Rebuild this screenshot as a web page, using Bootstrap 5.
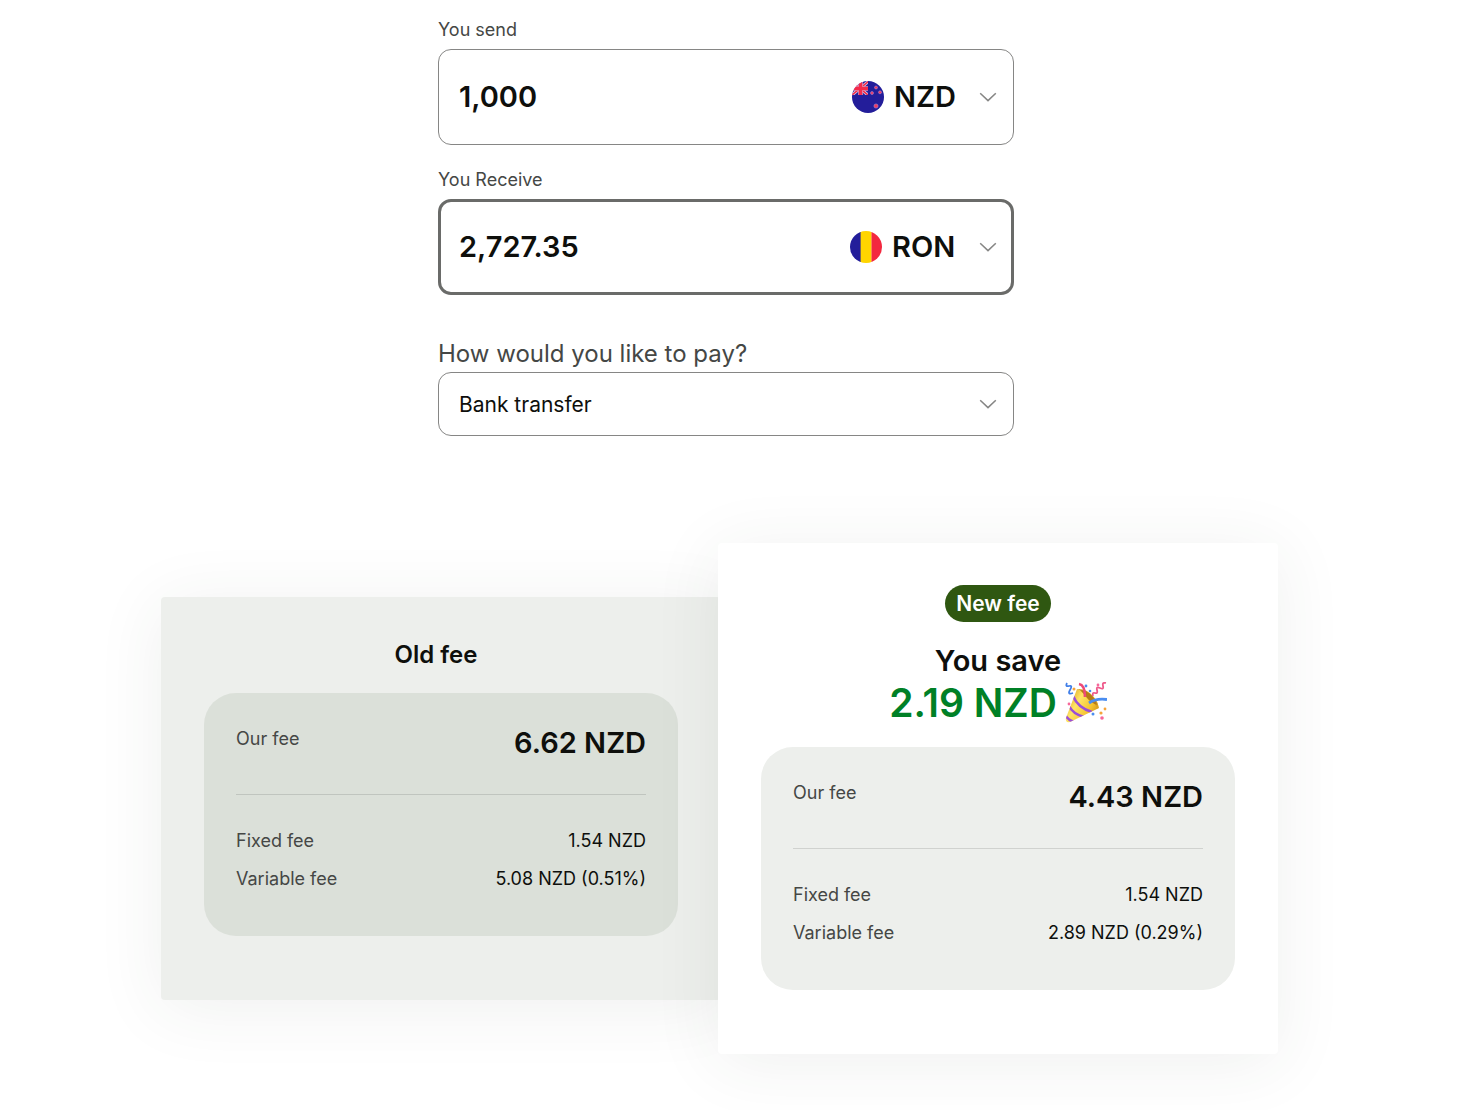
<!DOCTYPE html>
<html lang="en">
<head>
<meta charset="utf-8">
<meta name="viewport" content="width=device-width, initial-scale=1">
<title>Fee comparison</title>
<link rel="stylesheet" href="https://cdn.jsdelivr.net/npm/bootstrap@5.3.0/dist/css/bootstrap.min.css">
<style>
  body { font-family: Inter, "Liberation Sans", sans-serif; color: #0e0f0c; font-size: 18px; line-height: 28px; padding: 16px 6px 56px 0; overflow-x: hidden; }
  .calc { max-width: 576px; }
  .calc-label { color: #454745; margin-bottom: 5px; display: block; }
  .calc-label-lg { font-size: 24px; line-height: 36px; margin: 0; }
  .money-box { height: 96px; border: 1px solid #868685; border-radius: 13px; padding: 0 0 0 20px; margin-bottom: 21px; background: #fff; }
  .money-box.active-box { border: 3px solid #6a6b69; padding-left: 18px; margin-bottom: 41px; }
  .active-box .currency-select { margin-right: -2px; }
  .amount-input { font-size: 29px; line-height: 40px; font-weight: 600; color: #0e0f0c; border: 0; padding: 0; background: transparent; min-width: 0; }
  .amount-input:focus { outline: 0; }
  .chevron-select { background-color: transparent; background-repeat: no-repeat; background-position: right 16px center; background-size: 18px 10px;
    background-image: url("data:image/svg+xml,%3Csvg xmlns='http://www.w3.org/2000/svg' viewBox='0 0 18 10'%3E%3Cpath d='M1.2 1.2 9 8.6l7.800-7.400' fill='none' stroke='%23868685' stroke-width='1.500'/%3E%3C/svg%3E"); color: #0e0f0c; }
  .currency-select { font-size: 29px; line-height: 40px; font-weight: 600; border: 0; padding: 0 57px 0 10px; }
  .pay-select { height: 64px; border: 1px solid #868685; border-radius: 13px; padding: 2px 48px 0 20px; font-size: 21px; line-height: 32px; }
  .flag-icon { width: 32px; height: 32px; }
  .fees { max-width: 1130px; margin-top: 107px; padding-right: 13px; }
  .fee-card { flex: 1 1 0; border-radius: 4px; padding: 42px 43px 64px; box-shadow: 0 8px 68px rgba(50, 60, 46, .08); }
  .fee-old { background: #edefec; margin-right: -3px; }
  .fee-new { background: #fff; z-index: 1; }
  .old-title { font-size: 24px; line-height: 32px; font-weight: 600; margin: 0 10px 22px 0; }
  .new-pill { background: #2f5711; font-size: 21px; line-height: 37px; font-weight: 600; padding: 0 11px; }
  .save-title { font-size: 29px; line-height: 42px; font-weight: 600; margin: 18px 0 23px; }
  .save-amount { font-size: 39px; color: #008026; }
  .popper { width: 42px; height: 42px; }
  .fee-panel { border-radius: 32px; padding: 32px 32px 43px; color: #0e0f0c; }
  .fee-panel dt { font-weight: 400; color: #454745; }
  .fee-old .fee-panel { background: #dbe0d9; }
  .fee-new .fee-panel { background: #edefec; }
  .fee-total { font-size: 29px; line-height: 36px; font-weight: 600; }
  .fee-line { border-top: 1px solid rgba(14, 15, 12, .13); margin: 33px 0 32px; }
  .fee-panel .variable-row { padding-top: 10px; }
  @media (max-width: 900px) {
    .fees { flex-direction: column; padding-right: 0; }
    .fee-card { width: 100%; margin: 0; }
  }
</style>
</head>
<body>
<main>
  <form class="calc mx-auto">
    <label class="calc-label" for="send">You send</label>
    <div class="money-box d-flex align-items-center">
      <input class="amount-input flex-grow-1" id="send" type="text" inputmode="decimal" value="1,000">
      <svg class="flag-icon flex-shrink-0" viewBox="0 0 32 32" aria-hidden="true">
        <defs><clipPath id="disc"><circle cx="16" cy="16" r="16"/></clipPath>
          <clipPath id="canton"><path d="M0 0h16v14H0z"/></clipPath></defs>
        <g clip-path="url(#disc)">
          <path fill="#231d9a" d="M0 0h32v32H0z"/>
          <g clip-path="url(#canton)">
            <path d="M0 1 16 14M17 0 0 14" stroke="#d9cfe8" stroke-width="3"/>
            <path d="M0 1 16 14M17 0 0 14" stroke="#f5294a" stroke-width="1.600"/>
            <path d="M8.500 0v14M0 7.500h16" stroke="#d9a8cc" stroke-width="4.600"/>
            <path d="M8.500 0v14M0 7.500h16" stroke="#f5294a" stroke-width="3.400"/>
          </g>
          <g fill="#f5385c" stroke="#a78bd6" stroke-width=".6">
            <circle cx="24" cy="6.500" r="1.500"/><circle cx="20" cy="12" r="1.500"/><circle cx="28" cy="11.300" r="1.500"/><circle cx="24" cy="25" r="2.100"/>
          </g>
        </g>
      </svg>
      <select class="currency-select chevron-select form-select w-auto flex-shrink-0" aria-label="Currency you send"><option selected>NZD</option></select>
    </div>

    <label class="calc-label" for="receive">You Receive</label>
    <div class="money-box active-box d-flex align-items-center">
      <input class="amount-input flex-grow-1" id="receive" type="text" inputmode="decimal" value="2,727.35">
      <svg class="flag-icon flex-shrink-0" viewBox="0 0 32 32" aria-hidden="true">
        <g clip-path="url(#disc)">
          <path fill="#231d9a" d="M0 0h11v32H0z"/><path fill="#ffd500" d="M10.600 0h11v32h-11z"/><path fill="#f3283f" d="M21.500 0H32v32H21.500z"/>
        </g>
      </svg>
      <select class="currency-select chevron-select form-select w-auto flex-shrink-0" aria-label="Currency you receive"><option selected>RON</option></select>
    </div>

    <label class="calc-label calc-label-lg" for="pay">How would you like to pay?</label>
    <select class="pay-select chevron-select form-select" id="pay"><option selected>Bank transfer</option></select>
  </form>

  <section class="fees d-flex align-items-center mx-auto">
    <article class="fee-card fee-old">
      <h2 class="old-title text-center">Old fee</h2>
      <div class="fee-panel">
        <dl class="d-flex justify-content-between m-0"><dt>Our fee</dt><dd class="fee-total m-0">6.62 NZD</dd></dl>
        <div class="fee-line"></div>
        <dl class="d-flex justify-content-between m-0"><dt>Fixed fee</dt><dd class="m-0">1.54 NZD</dd></dl>
        <dl class="d-flex justify-content-between m-0 variable-row"><dt>Variable fee</dt><dd class="m-0">5.08 NZD (0.51%)</dd></dl>
      </div>
    </article>

    <article class="fee-card fee-new position-relative">
      <div class="d-flex justify-content-center"><span class="new-pill rounded-pill text-white">New fee</span></div>
      <h2 class="save-title text-center">You save
        <span class="save-amount d-flex justify-content-center align-items-center gap-2">2.19 NZD
          <svg class="popper flex-shrink-0" viewBox="0 0 42 42" role="img" aria-label="Party popper">
            <defs>
              <linearGradient id="gold" x1="0" y1="0.200" x2="1" y2="0.800"><stop offset="0" stop-color="#d9a01c"/><stop offset=".35" stop-color="#ffe566"/><stop offset=".7" stop-color="#f5c430"/><stop offset="1" stop-color="#c98a12"/></linearGradient>
              <clipPath id="cone"><path d="M12 7 1 36q-1 5 4 4L34 26Q30 12 12 7Z"/></clipPath>
            </defs>
            <path d="M12 7 1 36q-1 5 4 4L34 26Q30 12 12 7Z" fill="url(#gold)"/>
            <g clip-path="url(#cone)" fill="none" stroke="#9a4fd8" stroke-width="2.600">
              <path d="M8 14Q13 26 27 30"/><path d="M4 24Q8 32 19 35"/><path d="M0 33Q3 38 9 40"/>
            </g>
            <path d="M12 7Q21 6 28 14t5 13Q31 24 26 17T12 7Z" fill="#d9a325"/>
            <path d="M15 8Q22 8 27 14t5 9Q26 21 22 16T15 8Z" fill="#b57c16"/>
            <path d="M14 2Q20 3 20 15" fill="none" stroke="#ee4a78" stroke-width="2.600"/>
            <path d="M24 21Q31 16 42 17.500" fill="none" stroke="#4a8df0" stroke-width="2.800"/>
            <path d="M2 1Q0 5 4 4T5 8T8 11" fill="none" stroke="#3f7ee8" stroke-width="1.800"/>
            <path d="M28 14Q27 10 30 11T32 8T35 6T38 4T41 1" fill="none" stroke="#ee5b8c" stroke-width="1.800"/>
            <g fill="#4a8df0"><circle cx="21" cy="4" r="1.400"/><circle cx="25" cy="9" r="1.300"/><circle cx="28" cy="32" r="1.500"/></g>
            <g fill="#f7679a"><circle cx="33" cy="3" r="1.400"/><circle cx="4" cy="22" r="1.400"/><circle cx="37" cy="36" r="1.800"/></g>
            <g fill="#f6a43a"><circle cx="9" cy="7" r="1.500"/><circle cx="36" cy="31" r="1.600"/><circle cx="40" cy="27" r="1.400"/></g>
          </svg>
        </span>
      </h2>
      <div class="fee-panel">
        <dl class="d-flex justify-content-between m-0"><dt>Our fee</dt><dd class="fee-total m-0">4.43 NZD</dd></dl>
        <div class="fee-line"></div>
        <dl class="d-flex justify-content-between m-0"><dt>Fixed fee</dt><dd class="m-0">1.54 NZD</dd></dl>
        <dl class="d-flex justify-content-between m-0 variable-row"><dt>Variable fee</dt><dd class="m-0">2.89 NZD (0.29%)</dd></dl>
      </div>
    </article>
  </section>
</main>
<script src="https://cdn.jsdelivr.net/npm/bootstrap@5.3.0/dist/js/bootstrap.bundle.min.js"></script>
</body>
</html>
